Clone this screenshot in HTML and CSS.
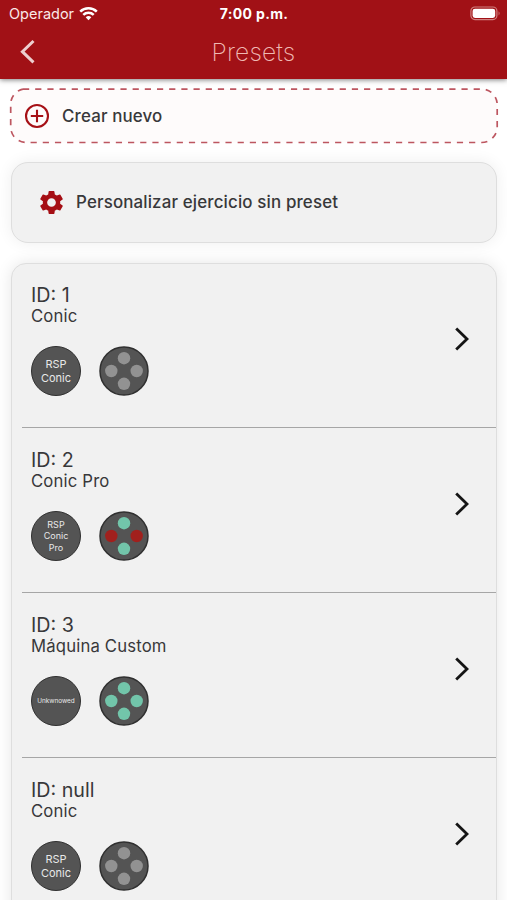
FILE: index.html
```
<!DOCTYPE html>
<html lang="es">
<head>
<meta charset="utf-8">
<title>Presets</title>
<link rel="stylesheet" href="styles.css">
</head>
<body>
<svg class="defs" width="0" height="0">
  <symbol id="chevron" viewBox="0 0 16 26"><path d="M2.2 2.4 13 13 2.2 23.6" fill="none" stroke="currentColor" stroke-width="2.8"/></symbol>
  <symbol id="dots" viewBox="0 0 50 50"><circle class="disc" cx="25" cy="25" r="24"/><circle class="v" cx="25" cy="12.2" r="6.2"/><circle class="v" cx="25" cy="37.8" r="6.2"/><circle class="h" cx="12.3" cy="25" r="6.2"/><circle class="h" cx="37.7" cy="25" r="6.2"/></symbol>
</svg>
<header class="top">
  <div class="status">
    <div class="carrier"><span>Operador</span>
      <svg class="wifi" width="19" height="15" viewBox="0 0 19 15"><g fill="none" stroke="#fff" stroke-width="2.5"><path d="M1.2 5.6a11.8 11.8 0 0 1 16.6 0"/><path d="M4.3 8.8a7.4 7.4 0 0 1 10.4 0"/></g><path d="M9.5 14.2 6.7 11.3a4 4 0 0 1 5.6 0z" fill="#fff"/></svg>
    </div>
    <div class="clock">7:00 p.m.</div>
    <svg class="battery" width="31" height="15" viewBox="0 0 31 15"><rect x=".9" y="1" width="26" height="12.6" rx="4" fill="none" stroke="#d0807f" stroke-width="1.2"/><rect x="2.6" y="2.7" width="22.6" height="9.2" rx="2.4" fill="#fff"/><path d="M28.6 5.2q1.9 2.1 0 4.2z" fill="#d0807f"/></svg>
  </div>
  <div class="nav">
    <svg class="back" width="18" height="26" viewBox="0 0 18 26"><path d="M15.5 2 4.4 12.7l11.1 10.7" fill="none" stroke="#edcfcf" stroke-width="3"/></svg>
    <h1>Presets</h1>
  </div>
</header>
<main>
  <div class="create">
    <svg class="dashes" width="490" height="56" viewBox="0 0 490 56"><path d="M14 1.1H472.5A15.5 15.5 0 0 1 488.2 17V39A15.5 15.5 0 0 1 472.5 54.5H17A15.5 15.5 0 0 1 1.7 39V17A15.5 15.5 0 0 1 14 1.1" fill="#fefbfb" stroke="#bd5660" stroke-width="1.7" stroke-dasharray="6.2 5.98"/></svg>
    <svg class="plus" width="26" height="26" viewBox="0 0 26 26" fill="none" stroke="#a61016" stroke-width="2.1"><circle cx="13" cy="13" r="11"/><path d="M13 6.8v12.4M6.8 13h12.4"/></svg>
    <span class="label">Crear nuevo</span>
  </div>
  <div class="custom">
    <svg class="gear" width="29" height="29" viewBox="0 0 24 24"><path fill="#a50e14" d="M19.14 12.94c.04-.3.06-.61.06-.94s-.02-.64-.07-.94l2.03-1.58a.49.49 0 0 0 .12-.61l-1.92-3.32a.49.49 0 0 0-.59-.22l-2.39.96a7 7 0 0 0-1.62-.94l-.36-2.54a.48.48 0 0 0-.48-.41h-3.84a.48.48 0 0 0-.47.41l-.36 2.54a7.2 7.2 0 0 0-1.62.94l-2.39-.96a.48.48 0 0 0-.59.22L2.74 8.87a.48.48 0 0 0 .12.61l2.03 1.58a6 6 0 0 0 0 1.88l-2.03 1.58a.49.49 0 0 0-.12.61l1.92 3.32c.12.22.37.29.59.22l2.39-.96c.5.38 1.03.7 1.62.94l.36 2.54c.05.24.24.41.48.41h3.84c.24 0 .44-.17.47-.41l.36-2.54a7 7 0 0 0 1.62-.94l2.39.96c.22.08.47 0 .59-.22l1.92-3.32a.48.48 0 0 0-.12-.61zM12 15.6a3.6 3.6 0 1 1 0-7.2 3.6 3.6 0 0 1 0 7.2z"/></svg>
    <span class="label">Personalizar ejercicio sin preset</span>
  </div>
  <div class="list">
    <section class="row">
      <div class="info"><h2>ID: 1</h2><p>Conic</p><div class="badges"><div class="badge">RSP<br>Conic</div><svg class="dots gray"><use href="#dots"/></svg></div></div>
      <svg class="go"><use href="#chevron"/></svg>
    </section>
    <section class="row">
      <div class="info"><h2>ID: 2</h2><p>Conic Pro</p><div class="badges"><div class="badge small">RSP<br>Conic<br>Pro</div><svg class="dots mixed"><use href="#dots"/></svg></div></div>
      <svg class="go"><use href="#chevron"/></svg>
    </section>
    <section class="row">
      <div class="info"><h2>ID: 3</h2><p>Máquina Custom</p><div class="badges"><div class="badge tiny">Unkwnowed</div><svg class="dots green"><use href="#dots"/></svg></div></div>
      <svg class="go"><use href="#chevron"/></svg>
    </section>
    <section class="row">
      <div class="info"><h2>ID: null</h2><p>Conic</p><div class="badges"><div class="badge">RSP<br>Conic</div><svg class="dots gray"><use href="#dots"/></svg></div></div>
      <svg class="go"><use href="#chevron"/></svg>
    </section>
  </div>
</main>
</body>
</html>
```

FILE: styles.css
```
* { box-sizing: border-box; }
html, body { height: 100%; }
body { margin: 0; overflow: hidden; background: #fff; color: #38383a; font-family: Inter, "Liberation Sans", sans-serif; display: flex; flex-direction: column; }
h1, h2, p { margin: 0; font-weight: 400; }
svg { display: block; flex: none; }
.defs { position: absolute; }
.top { flex: none; height: 79px; background: #a11116; box-shadow: 0 1px 5px rgba(0,0,0,.5); z-index: 1; }
.status { height: 27px; display: grid; grid-template-columns: 1fr auto 1fr; align-items: center; color: #fff; padding: 0 6px 0 9px; }
.carrier { display: flex; align-items: center; gap: 5px; font-size: 14.5px; color: #fae8e8; }
.wifi { margin-top: -1px; }
.clock { font-size: 14px; font-weight: 700; letter-spacing: .35px; margin-left: -2px; }
.battery { justify-self: end; }
.nav { height: 50px; display: grid; grid-template-columns: 50px 1fr 50px; align-items: center; }
.back { margin-left: 18px; }
h1 { text-align: center; font-size: 24.6px; font-weight: 200; color: #efb9b3; letter-spacing: .15px; }
main { flex: 1; padding: 9px 10px 0 11px; min-height: 0; overflow: hidden; }
.create { position: relative; height: 56px; display: flex; align-items: center; padding-left: 12px; margin-left: -2px; }
.dashes { position: absolute; left: 0; top: 0; }
.plus { position: relative; margin-left: 3px; margin-top: -1px; }
.create .label { position: relative; margin-left: 12px; margin-top: -1px; }
.label { font-size: 16.9px; font-weight: 500; letter-spacing: .15px; line-height: 20px; margin-top: -1px; }
.custom { margin-top: 18px; height: 81px; display: flex; align-items: center; padding-left: 24.5px; background: #f1f1f1; border: 1px solid #dedede; border-radius: 17px; box-shadow: 0 0 16px rgba(0,0,0,.07); }
.custom .label { margin-left: 10.5px; }
.list { margin-top: 20px; height: 700px; background: #f1f1f1; border: 1px solid #dedede; border-radius: 15px; box-shadow: 0 0 16px rgba(0,0,0,.1); padding-left: 10px; }
.row { height: 165px; border-bottom: 1px solid #a6a6a6; display: flex; justify-content: space-between; align-items: flex-start; padding: 20px 26px 0 9px; }
.row:first-child { height: 164px; padding-top: 19px; }
h2 { font-size: 19.7px; line-height: 24px; }
p { font-size: 16.7px; line-height: 20px; letter-spacing: .17px; margin-top: -1px; }
.badges { display: flex; gap: 18px; margin-top: 20px; }
.badge { width: 50px; height: 50px; border-radius: 50%; background: #545454; border: 1.5px solid #303030; color: #e8e8e8; display: flex; align-items: center; justify-content: center; text-align: center; font-size: 11px; line-height: 14px; }
.small { font-size: 9px; line-height: 11.3px; }
.tiny { font-size: 6.4px; }
.dots { width: 50px; height: 50px; }
.disc { fill: #545454; stroke: #303030; stroke-width: 1.5px; }
.v { fill: var(--v); }
.h { fill: var(--h); }
.gray { --v: #929292; --h: #929292; }
.mixed { --v: #72c5aa; --h: #a1201d; }
.green { --v: #72c5aa; --h: #72c5aa; }
.go { width: 16px; height: 26px; margin-top: 43px; color: #151515; }
```
